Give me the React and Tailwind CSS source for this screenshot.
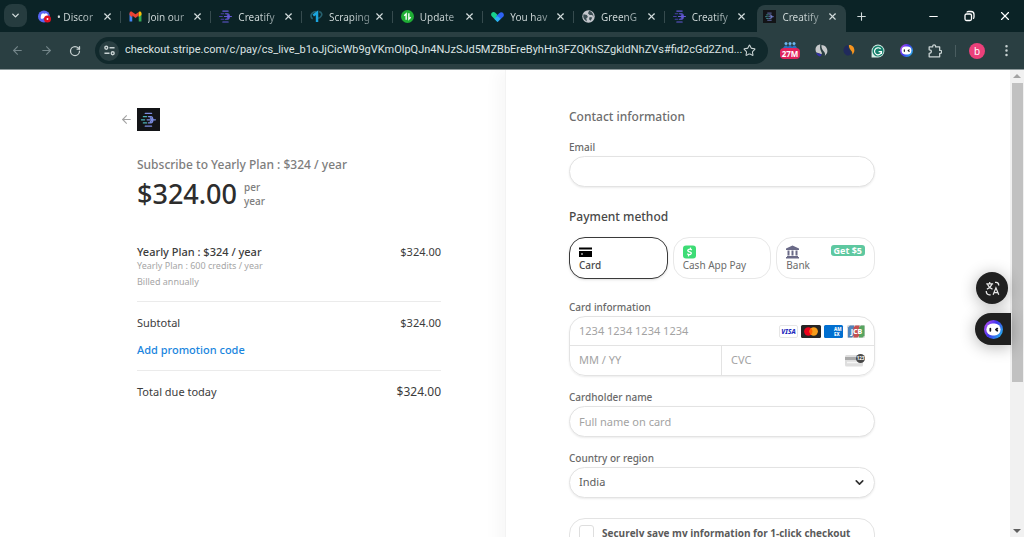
import React from "react";
import { ArrowLeft, ArrowRight, ChevronDown, Minus, MoreVertical, Plus, RotateCw, Star, X } from "lucide-react";

function CreatifyMark({ dark }) {
  const a = dark ? "#4fb3b8" : "#4a3fa8";
  const b = dark ? "#7c8ce0" : "#6558d8";
  return (
    <svg viewBox="0 0 24 24" className="size-full" fill="none" strokeWidth="2" aria-hidden="true">
      {dark && <rect width="24" height="24" fill="#131417" />}
      <g transform={dark ? "translate(4 4.400) scale(.66)" : ""} strokeLinecap="round">
        <path d="M7 2h10M7 22h10" stroke={b} />
        <path d="M4 7h5M1 12h5M4 17h5" stroke={a} />
        <path d="M12 7h4q3 0 3 5t-3 5h-4M10 12h7M15 9l4 3-4 3M20 12h3" stroke={b} />
      </g>
    </svg>
  );
}

function DiscordIcon() {
  return (
    <svg viewBox="0 0 24 24" className="size-full" aria-hidden="true">
      <circle cx="11" cy="12" r="11" fill="#5865f2" />
      <path d="M5 15c0-4 1-7 2-8l3-1 1 1h2l1-1 3 1c1 2 2 4 2 8l-3 2-1-2H9l-1 2z" fill="#fff" />
      <circle cx="17.500" cy="16.500" r="6.500" fill="#e01020" />
      <circle cx="17.500" cy="16.500" r="1.800" fill="#fff" />
    </svg>
  );
}

function GmailIcon() {
  return (
    <svg viewBox="0 0 24 24" className="size-full" aria-hidden="true">
      <path d="M1 6v15h5V10z" fill="#4285f4" />
      <path d="M23 6v15h-5V10z" fill="#34a853" />
      <path d="M1 6c0-3 3-4 5-2.500L12 8l6-4.500v6.500l-6 4.700L6 10v4L1 9z" fill="#ea4335" />
      <path d="M18 3.500C20 2 23 3 23 6v3l-5 4z" fill="#fbbc04" />
    </svg>
  );
}

function ScraperIcon() {
  return (
    <svg viewBox="0 0 24 24" className="size-full" fill="none" aria-hidden="true">
      <path d="M12 3C5 3 1 8 2 12c0 2 1 3 3 4" stroke="#27616f" strokeWidth="3" />
      <path d="M17 3c5 1 6 6 3 9-1 2-3 3-5 3" stroke="#27616f" strokeWidth="3" />
      <path d="M6 10l7-5v17" stroke="#1ba4dd" strokeWidth="4.500" />
    </svg>
  );
}

function UpdateIcon() {
  return (
    <svg viewBox="0 0 24 24" className="size-full" fill="none" aria-hidden="true">
      <circle cx="12" cy="12" r="12" fill="#1fae35" />
      <path d="M9.500 18V7L6 10.500M14.500 6v11l3.500-3.500" stroke="#fff" strokeWidth="2.500" />
    </svg>
  );
}

function HeartIcon() {
  return (
    <svg viewBox="0 0 24 24" className="size-full" aria-hidden="true">
      <path d="M12 22L1 11c-3-5 3-10 7-6l8 8z" fill="#18d18c" />
      <path d="M12 22l11-10c3-5-3-11-8-6l-6 6 4 3z" fill="#2e62f4" />
      <path d="M12 22l-6-6 6-5 6 5z" fill="#2bb0f2" />
    </svg>
  );
}

function GlobeIcon() {
  return (
    <svg viewBox="0 0 24 24" className="size-full" aria-hidden="true">
      <circle cx="12" cy="12" r="11.500" fill="#c3c6cc" />
      <path d="M3 8l6 1 2 4-3 2 1 6c-5-2-8-8-6-13zM13 2l-2 4 3 3h5l2 4c1-6-4-11-8-11zM14 13l5 1-3 6-3-3z" fill="#3a4d52" />
    </svg>
  );
}

function BotIcon() {
  return (
    <svg viewBox="0 0 24 24" className="size-full" aria-hidden="true">
      <defs>
        <linearGradient id="bot" x1="0" y1=".2" x2="1" y2=".8">
          <stop offset="0" stopColor="#b64df2" />
          <stop offset=".45" stopColor="#4335ee" />
          <stop offset="1" stopColor="#22b8ee" />
        </linearGradient>
      </defs>
      <circle cx="12" cy="12" r="12" fill="url(#bot)" />
      <rect x="3" y="4.500" width="18" height="15" rx="7.500" fill="#fff" />
      <path d="M8 10.800v2.800M16.800 10.800l-1.800 1.400 1.800 1.400" stroke="#15161d" strokeWidth="2.200" fill="none" strokeLinecap="round" strokeLinejoin="round" />
    </svg>
  );
}

const tabs = [
  { title: "• Discor", icon: <DiscordIcon /> },
  { title: "Join our", icon: <GmailIcon /> },
  { title: "Creatify", icon: <CreatifyMark /> },
  { title: "Scraping", icon: <ScraperIcon /> },
  { title: "Update", icon: <UpdateIcon /> },
  { title: "You hav", icon: <HeartIcon /> },
  { title: "GreenG", icon: <GlobeIcon /> },
  { title: "Creatify", icon: <CreatifyMark /> },
  { title: "Creatify", icon: <CreatifyMark dark />, active: true },
];

function TabStrip() {
  return (
    <div className="flex h-8 items-stretch bg-[#0b2326] pl-1 text-[#d3dcdc]">
      <button aria-label="Search tabs" className="mt-1 mr-1 grid h-[23px] w-[23px] shrink-0 place-items-center rounded-lg bg-[#263c3f]">
        <ChevronDown size={11} strokeWidth={3} />
      </button>
      <div role="tablist" className="flex max-w-[816px] min-w-0 flex-1">
        {tabs.map((t, i) => (
          <div
            key={i}
            className={"mx-px mt-[5px] flex min-w-0 flex-1 items-center rounded-t-lg " + (t.active ? "bg-[#2a3f42]" : "")}
          >
            <div role="tab" aria-selected={!!t.active} className="flex min-w-0 flex-1 items-center gap-[6px] pb-1 pl-[6px]">
              <span className="size-[13px] shrink-0">{t.icon}</span>
              <span className="flex-1 bg-linear-to-r from-[#d3dcdc] from-50% to-[#5c6f72] bg-clip-text text-[10px] leading-4 whitespace-nowrap text-transparent">
                {t.title}
              </span>
            </div>
            <button aria-label="Close tab" className="mr-[7px] mb-1 shrink-0">
              <X size={11} strokeWidth={2.5} />
            </button>
            <span className={"mb-1 h-3 w-px shrink-0 " + (i < 7 ? "bg-[#364b4e]" : "")} />
          </div>
        ))}
      </div>
      <button aria-label="New tab" className="ml-1 grid w-5 place-items-center">
        <Plus size={13} />
      </button>
      <div className="ml-auto flex items-center gap-[23px] pr-3 text-white">
        <button aria-label="Minimize"><Minus size={13} /></button>
        <button aria-label="Restore">
          <svg width="12" height="12" viewBox="0 0 12 12" fill="none" stroke="currentColor" strokeWidth="1.300">
            <rect x="2" y="4" width="6.500" height="6.500" rx="1.500" />
            <path d="M4 2.500q0-1 1.500-1h2.500q3 0 3 3v2.500q0 1.500-1 1.500" />
          </svg>
        </button>
        <button aria-label="Close window"><X size={14} /></button>
      </div>
    </div>
  );
}

function Toolbar() {
  return (
    <div className="flex h-[37px] shrink-0 items-center bg-[#2a3f42] pr-[10px] pl-[11px] text-[#c9d3d3]">
      <div className="flex items-center gap-4">
        <button aria-label="Back" className="text-[#74868a]"><ArrowLeft size={13} /></button>
        <button aria-label="Forward" className="text-[#74868a]"><ArrowRight size={13} /></button>
        <button aria-label="Reload"><RotateCw size={12} strokeWidth={2.5} /></button>
      </div>
      <div className="ml-[14px] flex h-[27px] min-w-0 flex-1 items-center rounded-full bg-[#11292c] pr-3 pl-1">
        <button aria-label="Site information" className="grid size-5 shrink-0 place-items-center rounded-full bg-[#2a3f42]">
          <svg width="11" height="11" viewBox="0 0 12 12" fill="none" stroke="currentColor" strokeWidth="1.500">
            <circle cx="2.500" cy="3" r="1.600" /><path d="M6 3h5.500M.5 9H6" /><circle cx="9.500" cy="9" r="1.600" />
          </svg>
        </button>
        <input
          aria-label="Address"
          readOnly
          className="ml-[6px] min-w-0 flex-1 bg-transparent font-['Roboto',sans-serif] text-[11px] text-[#dbe3e3] outline-none"
          value="checkout.stripe.com/c/pay/cs_live_b1oJjCicWb9gVKmOlpQJn4NJzSJd5MZBbEreByhHn3FZQKhSZgkldNhZVs#fid2cGd2Znd..."
        />
        <button aria-label="Bookmark"><Star size={13} /></button>
      </div>
      <div className="ml-3 flex items-center gap-[15px]">
        <button aria-label="Traffic" className="flex w-5 flex-col items-center">
          <svg width="14" height="6" viewBox="0 0 14 6" fill="#6fb7ee" aria-hidden="true">
            <circle cx="3" cy="1.500" r="1.500" /><circle cx="7" cy="1.500" r="1.500" /><circle cx="11" cy="1.500" r="1.500" />
            <path d="M0 6q3-5 5-1 2-4 4 0 3-4 5 1z" fill="#2c6fc0" />
          </svg>
          <span className="rounded-sm bg-[#e0245e] px-[2px] text-[8px] leading-[11px] font-bold text-white">27M</span>
        </button>
        <button aria-label="SimilarWeb" className="size-[13px]">
          <svg viewBox="0 0 24 24" aria-hidden="true">
            <path d="M10 1C3 1-1 8 2 15l10 4c3-4-5-7-2-18z" fill="#c8cacc" />
            <path d="M12 2c8 0 13 8 10 15l-4 5c3-9-7-9-6-20z" fill="#c8cacc" />
            <path d="M2 16l10 3c0 3-2 4-3 4-3-1-6-3-7-7z" fill="#3530a8" />
          </svg>
        </button>
        <button aria-label="Rank" className="size-[13px]">
          <svg viewBox="0 0 24 24" aria-hidden="true">
            <path d="M10 2c-2 9 6 10 4 18-6 4-14-2-13-10 1-5 5-8 9-8z" fill="#202a5c" />
            <path d="M11 2c9-1 14 11 6 18 2-8-7-9-6-18z" fill="#f7941e" />
          </svg>
        </button>
        <button aria-label="Grammarly" className="size-[14px]">
          <svg viewBox="0 0 24 24" fill="none" aria-hidden="true">
            <path d="M1 23V12a11 11 0 1 1 11 11z" fill="#d9efe9" />
            <circle cx="12" cy="12" r="9.500" fill="#15806c" />
            <path d="M16.500 8.500A6 6 0 1 0 18 13h-5M18 13v4" stroke="#fff" strokeWidth="2" />
          </svg>
        </button>
        <button aria-label="Assistant" className="size-[13px]"><BotIcon /></button>
        <button aria-label="Extensions" className="size-[14px]">
          <svg viewBox="0 0 24 24" fill="none" stroke="currentColor" strokeWidth="2.200" aria-hidden="true">
            <path d="M2 5h6V4a2.500 2.500 0 0 1 5 0v1h7v6h1a2.500 2.500 0 0 1 0 5h-1v6H2v-6c5 0 5-6 0-6z" strokeLinejoin="round" />
          </svg>
        </button>
      </div>
      <span className="mx-[13px] h-3 w-px bg-[#4a5d60]" />
      <button aria-label="Profile" className="grid size-4 place-items-center rounded-full bg-[#ec407a] text-[10px] leading-none text-white">b</button>
      <button aria-label="Menu" className="ml-[14px]"><MoreVertical size={15} /></button>
    </div>
  );
}

function Summary() {
  return (
    <section className="pt-[38px] pr-16">
      <div className="ml-auto max-w-[304px] text-[11px] leading-4 text-[#3c3c3c]">
        <div className="-ml-[17px] flex items-center gap-1">
          <a href="#back" aria-label="Back" className="text-[#a3a3a3]"><ArrowLeft size={13} /></a>
          <span className="size-[23px]"><CreatifyMark dark /></span>
        </div>
        <h1 className="mt-6 text-[12px] leading-5 font-medium text-[#7d7d7d]">Subscribe to Yearly Plan : $324 / year</h1>
        <div className="flex items-center gap-[7px]">
          <span className="text-[27px] leading-[38px] font-medium text-[#2d2d2d]">$324.00</span>
          <span className="text-[10px] leading-[14px] font-medium text-[#7d7d7d]">per<br />year</span>
        </div>
        <div className="mt-[31px] flex justify-between">
          <span className="font-medium">Yearly Plan : $324 / year</span>
          <span>$324.00</span>
        </div>
        <p className="text-[9px] leading-3 text-[#a6a6a6]">Yearly Plan : 600 credits / year</p>
        <p className="mt-1 text-[9px] leading-3 text-[#a6a6a6]">Billed annually</p>
        <div className="mt-[13px] flex justify-between border-t border-[#ebebeb] pt-[13px]">
          <span>Subtotal</span>
          <span>$324.00</span>
        </div>
        <button className="mt-[11px] block font-medium text-[#1a85de]">Add promotion code</button>
        <div className="mt-3 flex justify-between border-t border-[#ebebeb] pt-[13px]">
          <span>Total due today</span>
          <span className="text-[12px]">$324.00</span>
        </div>
      </div>
    </section>
  );
}

function CardBrands() {
  return (
    <svg className="h-[13px] w-[86px] shrink-0" viewBox="0 0 86 13" role="img" aria-label="Visa, Mastercard, American Express, JCB" fontFamily="Noto Sans, sans-serif" fontWeight="800">
      <rect x=".5" y=".5" width="18" height="12" rx="1.500" fill="#fff" stroke="#e6e6e6" />
      <text x="9.500" y="9" fontSize="6.500" fontStyle="italic" fill="#1c28bd" textAnchor="middle">VISA</text>
      <rect x="22" width="20" height="13" rx="1.500" fill="#252525" />
      <circle cx="29.300" cy="6.500" r="4.200" fill="#eb001b" />
      <circle cx="34.700" cy="6.500" r="4.200" fill="#f79e1b" />
      <path d="M32 3.300a4.200 4.200 0 0 1 0 6.400a4.200 4.200 0 0 1 0-6.400" fill="#ff5f00" />
      <rect x="45" width="19" height="13" rx="1.500" fill="#016fd0" />
      <text x="55" y="6.200" fontSize="4.500" fill="#fff">AM</text>
      <text x="55" y="10.500" fontSize="4.500" fill="#fff">EX</text>
      <rect x="68" width="18" height="13" rx="1.500" fill="#dadada" />
      <path d="M71 .5h4v10l-2 2h-4v-10z" fill="#4e83bb" />
      <path d="M76.500.5h4v10l-2 2h-4v-10z" fill="#c65050" />
      <path d="M82 .5h3.500v10l-2 2H80v-10z" fill="#57a460" />
      <text x="77.500" y="9" fontSize="7" fill="#fff" textAnchor="middle">JCB</text>
    </svg>
  );
}

const labelStyle = "block text-[10px] leading-4 font-medium text-[#696969]";
const fieldStyle =
  "mt-px block h-[31px] w-full rounded-full border border-[#e3e3e3] bg-white px-[9px] text-[11px] text-[#5c5c5c] shadow-[0_1px_2px_rgba(0,0,0,0.08)] outline-none placeholder:text-[#a3a3a3]";
const methodStyle = "flex h-[42px] min-w-0 flex-col items-start justify-center rounded-2xl border bg-white px-[9px] text-[10px] leading-3";

function PaymentForm() {
  return (
    <section className="border-l border-[#f3f3f3] pt-[37px] pl-[63px] shadow-[-8px_0_14px_rgba(0,0,0,0.03)]">
      <form className="w-full max-w-[306px]">
        <h2 className="text-[12px] leading-5 font-medium text-[#6d6d6d]">Contact information</h2>
        <label htmlFor="email" className={labelStyle + " mt-3"}>Email</label>
        <input id="email" type="email" className={fieldStyle} />

        <h2 className="mt-5 text-[12px] leading-5 font-medium text-[#484848]">Payment method</h2>
        <div className="mt-[10px] grid grid-cols-3 gap-[5px]">
          <button type="button" className={methodStyle + " border-[#3a3a3a] font-medium text-[#484848] shadow-sm"}>
            <svg width="13" height="14" viewBox="0 0 13 14" aria-hidden="true">
              <path d="M0 2.500h13v2H0zM0 6h13v6H0z" fill="#000" /><path d="M2 9h2" stroke="#fff" />
            </svg>
            Card
          </button>
          <button type="button" className={methodStyle + " border-[#e8e8e8] text-[#6b6b6b]"}>
            <svg width="13" height="14" viewBox="0 0 13 14" fill="none" aria-hidden="true">
              <rect y=".5" width="13" height="13" rx="3" fill="#3ddc75" />
              <path d="M8.800 5Q7.500 3.800 5.900 4.300C4 5 4.800 6.400 6.500 6.800s2.500 1.600 1 2.600q-1.600.7-3.300-.6M7.600 2.700l-.3 1.300M5.700 9.800l-.3 1.500" stroke="#fff" strokeWidth="1.300" />
            </svg>
            Cash App Pay
          </button>
          <button type="button" className={methodStyle + " border-[#e8e8e8] text-[#6b6b6b]"}>
            <span className="flex w-full items-start justify-between">
              <svg width="13" height="14" viewBox="0 0 13 14" fill="#6a6a87" aria-hidden="true">
                <path d="M6.500.5L13 3.500V5H0V3.500zM1.500 5.500h2v5h-2zM5.500 5.500h2v5h-2zM9.500 5.500h2v5h-2zM1 11h11v1H1zM0 12h13v1.500H0z" />
              </svg>
              <span className="rounded-[3px] bg-[#5ec8a0] px-[3px] text-[9px] leading-[11px] font-bold text-white">Get $5</span>
            </span>
            Bank
          </button>
        </div>

        <fieldset className="mt-5">
          <legend className={labelStyle}>Card information</legend>
          <div className="mt-px overflow-hidden rounded-2xl border border-[#e3e3e3] text-[11px] shadow-[0_1px_2px_rgba(0,0,0,0.08)]">
            <div className="flex h-[29px] items-center border-b border-[#e3e3e3] px-[9px]">
              <input aria-label="Card number" placeholder="1234 1234 1234 1234" className="min-w-0 flex-1 outline-none placeholder:text-[#a3a3a3]" />
              <CardBrands />
            </div>
            <div className="grid h-[29px] grid-cols-2">
              <input aria-label="Expiration" placeholder="MM / YY" className="min-w-0 border-r border-[#e3e3e3] px-[9px] outline-none placeholder:text-[#a3a3a3]" />
              <div className="flex min-w-0 items-center px-[9px]">
                <input aria-label="CVC" placeholder="CVC" className="min-w-0 flex-1 outline-none placeholder:text-[#a3a3a3]" />
                <svg width="20" height="14" viewBox="0 0 20 14" aria-hidden="true">
                  <rect y="1" width="18" height="11.500" rx="1.500" fill="#dedede" />
                  <path d="M0 3h18v3H0z" fill="#aaa" />
                  <path d="M2 8.500h12" stroke="#f5f5f5" strokeWidth="1.500" />
                  <circle cx="15.500" cy="4.500" r="4.500" fill="#484848" />
                  <text x="15.500" y="6.300" fontSize="4.500" fontWeight="700" textAnchor="middle" fill="#fff">123</text>
                </svg>
              </div>
            </div>
          </div>
        </fieldset>

        <label htmlFor="name" className={labelStyle + " mt-[13px]"}>Cardholder name</label>
        <input id="name" placeholder="Full name on card" className={fieldStyle} />

        <label htmlFor="country" className={labelStyle + " mt-[13px]"}>Country or region</label>
        <div className="relative">
          <select id="country" className={fieldStyle + " appearance-none"}>
            <option>India</option>
          </select>
          <ChevronDown size={13} strokeWidth={3} className="pointer-events-none absolute top-[9px] right-[9px] text-[#303030]" />
        </div>

        <div className="mt-5 flex items-start gap-2 rounded-2xl border border-[#e3e3e3] px-[9px] pt-[6px] pb-6">
          <input id="save" type="checkbox" className="size-[15px] shrink-0 appearance-none rounded-[3px] border border-[#dedede] bg-white" />
          <label htmlFor="save" className="font-['Open_Sans',sans-serif] text-[10px] leading-4 font-bold whitespace-nowrap text-[#5a5a5a]">Securely save my information for 1-click checkout</label>
        </div>
      </form>
    </section>
  );
}

export default function App() {
  return (
    <div className="flex h-screen flex-col overflow-hidden bg-white font-['Noto_Sans','Open_Sans',sans-serif]">
      <TabStrip />
      <Toolbar />
      <div className="relative flex min-h-0 flex-1 border-t border-[#8d999b]">
        <main className="grid min-w-0 flex-1 grid-cols-2 overflow-hidden">
          <Summary />
          <PaymentForm />
        </main>
        <div aria-hidden="true" className="flex w-[14px] shrink-0 flex-col items-center bg-[#f1f1f1]">
          <span className="my-1 border-x-4 border-b-4 border-x-transparent border-b-[#a3a3a3]" />
          <span className="mt-px h-[64%] w-[11px] bg-[#c1c1c1]" />
          <span className="mt-auto mb-1 border-x-4 border-t-4 border-x-transparent border-t-[#606060]" />
        </div>
        <div className="absolute top-[202px] right-[13px] flex flex-col items-end gap-[9px]">
          <button aria-label="Translate" className="mr-[3px] grid size-8 place-items-center rounded-full bg-[#202020] shadow-[0_2px_16px_rgba(0,0,0,0.3)]">
            <svg width="15" height="15" viewBox="0 0 24 24" fill="none" stroke="#e8e8e8" strokeWidth="2" aria-hidden="true">
              <path d="M2 4.500h11M7.500 1.500v3M4 5q2 6 8 8M11 5q-2 6-8 8M16 2h2q4 0 4 5M2 16q0 6 5 6h2M13 22l4.500-11L22 22M14.500 18.500h6" />
            </svg>
          </button>
          <button aria-label="Open assistant" className="grid h-8 w-9 place-items-center rounded-l-full bg-[#202020] shadow-[0_2px_16px_rgba(0,0,0,0.3)]">
            <span className="size-[19px]"><BotIcon /></span>
          </button>
        </div>
      </div>
    </div>
  );
}
